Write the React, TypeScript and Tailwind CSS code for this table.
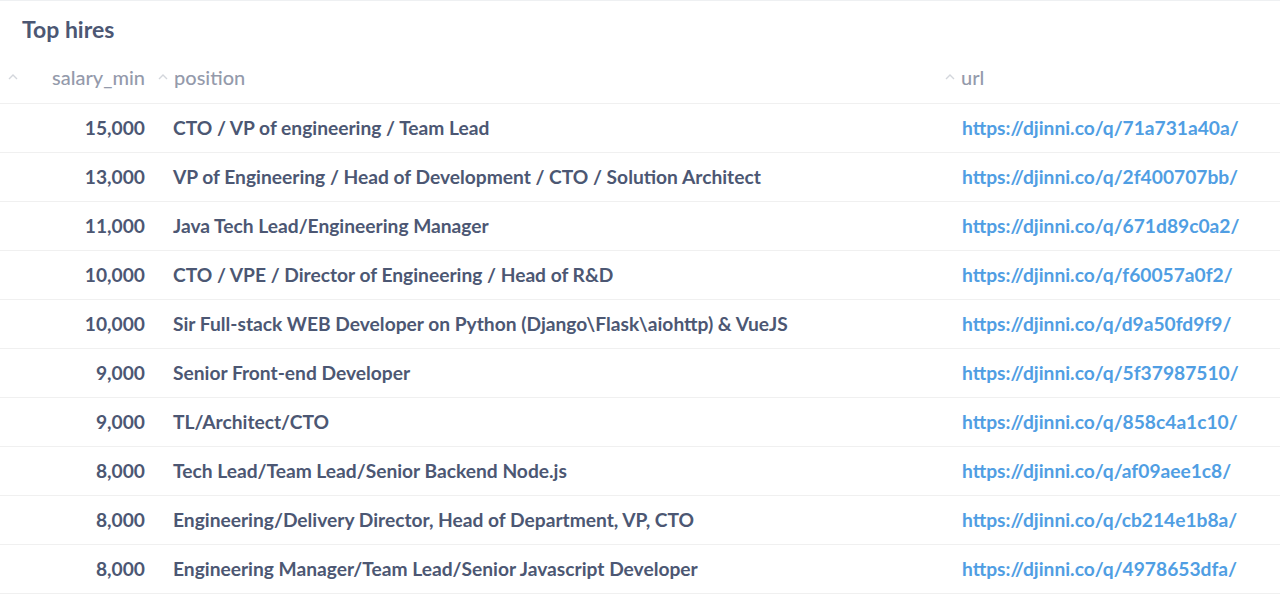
import React from 'react'

const ROWS = [
  { salary: '15,000', position: 'CTO / VP of engineering / Team Lead', url: 'https://djinni.co/q/71a731a40a/' },
  { salary: '13,000', position: 'VP of Engineering / Head of Development / CTO / Solution Architect', url: 'https://djinni.co/q/2f400707bb/' },
  { salary: '11,000', position: 'Java Tech Lead/Engineering Manager', url: 'https://djinni.co/q/671d89c0a2/' },
  { salary: '10,000', position: 'CTO / VPE / Director of Engineering / Head of R&D', url: 'https://djinni.co/q/f60057a0f2/' },
  { salary: '10,000', position: 'Sir Full-stack WEB Developer on Python (Django\\Flask\\aiohttp) & VueJS', url: 'https://djinni.co/q/d9a50fd9f9/' },
  { salary: '9,000', position: 'Senior Front-end Developer', url: 'https://djinni.co/q/5f37987510/' },
  { salary: '9,000', position: 'TL/Architect/CTO', url: 'https://djinni.co/q/858c4a1c10/' },
  { salary: '8,000', position: 'Tech Lead/Team Lead/Senior Backend Node.js', url: 'https://djinni.co/q/af09aee1c8/' },
  { salary: '8,000', position: 'Engineering/Delivery Director, Head of Department, VP, CTO', url: 'https://djinni.co/q/cb214e1b8a/' },
  { salary: '8,000', position: 'Engineering Manager/Team Lead/Senior Javascript Developer', url: 'https://djinni.co/q/4978653dfa/' },
]

function Caret() {
  return (
    <svg width="10" height="6" viewBox="0 0 10 6" className="shrink-0">
      <path d="M1 5 L5 1 L9 5" fill="none" stroke="#d3d6dc" strokeWidth="1.4" />
    </svg>
  )
}

export default function App() {
  return (
    <div className="h-[603px] w-[1280px] overflow-hidden bg-white border-t border-[#eef0f2]" style={{ fontFamily: 'Lato, "Open Sans", sans-serif' }}>
      <div className="h-[54px] flex items-center pl-[22px] pt-[2px]">
        <h1 className="text-[23px] font-bold text-[#4c5773]">Top hires</h1>
      </div>
      <div className="grid grid-cols-[155px_1fr_340px]">
        <div className="h-[49px] flex items-center justify-between pl-[8px] pr-[10px] pb-[4px] border-b border-[#f0f0f0] text-[20px] text-[#949aab] font-medium">
          <Caret />
          <span>salary_min</span>
        </div>
        <div className="h-[49px] flex items-center gap-[6px] pl-[3px] pb-[4px] border-b border-[#f0f0f0] text-[20px] text-[#949aab] font-medium">
          <Caret />
          <span>position</span>
        </div>
        <div className="h-[49px] flex items-center gap-[6px] pl-[5px] pb-[4px] border-b border-[#f0f0f0] text-[20px] text-[#949aab] font-medium">
          <Caret />
          <span>url</span>
        </div>
        {ROWS.map((r, i) => (
          <React.Fragment key={i}>
            <div className="h-[49px] flex items-center justify-end pr-[10px] border-b border-[#f0f0f0] text-[19.2px] font-bold text-[#4c5773]">
              {r.salary}
            </div>
            <div className="h-[49px] flex items-center pl-[18px] border-b border-[#f0f0f0] text-[19.2px] font-bold text-[#4c5773] whitespace-nowrap">
              {r.position}
            </div>
            <div className="h-[49px] flex items-center pl-[22px] border-b border-[#f0f0f0] text-[19.2px] font-bold text-[#509ee3] whitespace-nowrap">
              {r.url}
            </div>
          </React.Fragment>
        ))}
      </div>
    </div>
  )
}
